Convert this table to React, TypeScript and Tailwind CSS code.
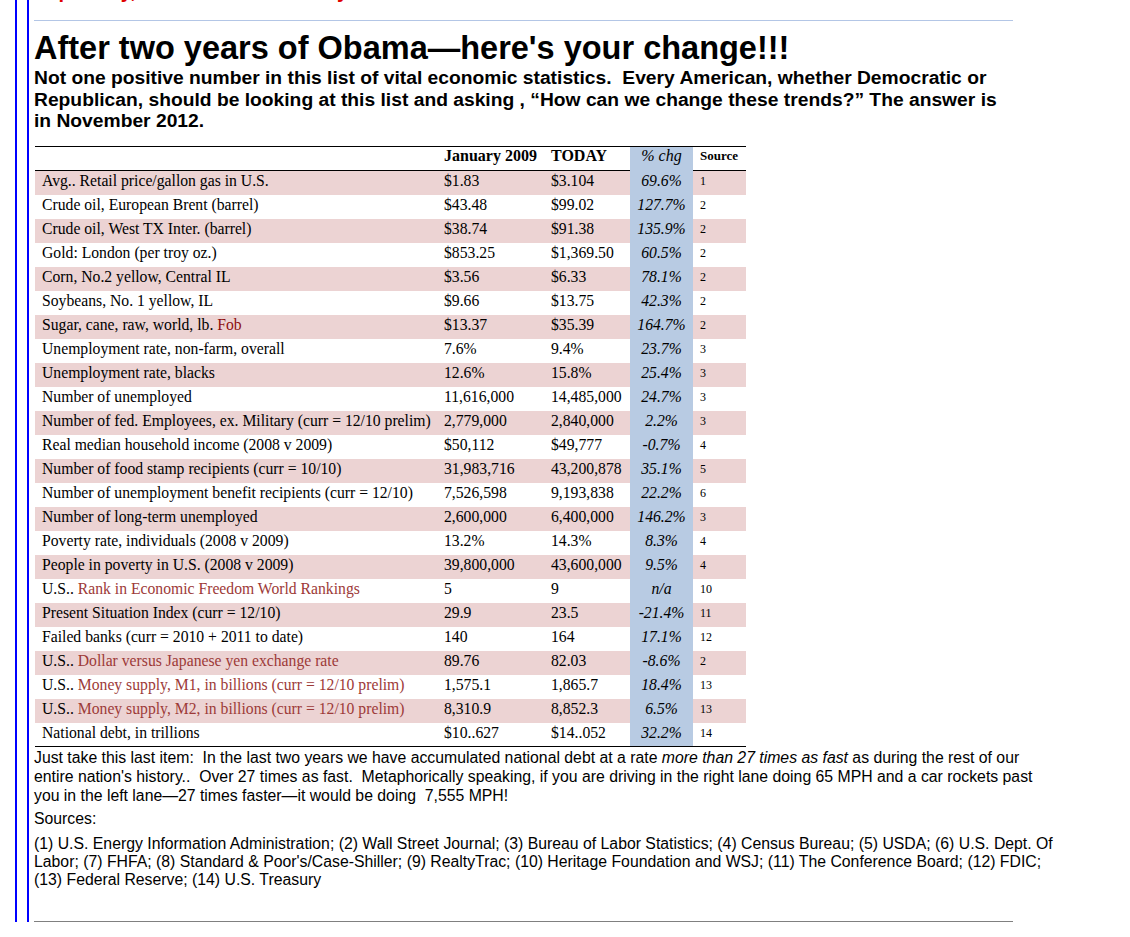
// Quoted e-mail: economic statistics table

type Row = {
  label: string
  red?: string
  jan: string
  today: string
  chg: string
  src: string
  redTone?: 'fob' | 'link'
}

const rows: Row[] = [
  { label: 'Avg.. Retail price/gallon gas in U.S.', jan: '$1.83', today: '$3.104', chg: '69.6%', src: '1' },
  { label: 'Crude oil, European Brent (barrel)', jan: '$43.48', today: '$99.02', chg: '127.7%', src: '2' },
  { label: 'Crude oil, West TX Inter. (barrel)', jan: '$38.74', today: '$91.38', chg: '135.9%', src: '2' },
  { label: 'Gold: London (per troy oz.)', jan: '$853.25', today: '$1,369.50', chg: '60.5%', src: '2' },
  { label: 'Corn, No.2 yellow, Central IL', jan: '$3.56', today: '$6.33', chg: '78.1%', src: '2' },
  { label: 'Soybeans, No. 1 yellow, IL', jan: '$9.66', today: '$13.75', chg: '42.3%', src: '2' },
  { label: 'Sugar, cane, raw, world, lb. ', red: 'Fob', redTone: 'fob', jan: '$13.37', today: '$35.39', chg: '164.7%', src: '2' },
  { label: 'Unemployment rate, non-farm, overall', jan: '7.6%', today: '9.4%', chg: '23.7%', src: '3' },
  { label: 'Unemployment rate, blacks', jan: '12.6%', today: '15.8%', chg: '25.4%', src: '3' },
  { label: 'Number of unemployed', jan: '11,616,000', today: '14,485,000', chg: '24.7%', src: '3' },
  { label: 'Number of fed. Employees, ex. Military (curr = 12/10 prelim)', jan: '2,779,000', today: '2,840,000', chg: '2.2%', src: '3' },
  { label: 'Real median household income (2008 v 2009)', jan: '$50,112', today: '$49,777', chg: '-0.7%', src: '4' },
  { label: 'Number of food stamp recipients (curr = 10/10)', jan: '31,983,716', today: '43,200,878', chg: '35.1%', src: '5' },
  { label: 'Number of unemployment benefit recipients (curr = 12/10)', jan: '7,526,598', today: '9,193,838', chg: '22.2%', src: '6' },
  { label: 'Number of long-term unemployed', jan: '2,600,000', today: '6,400,000', chg: '146.2%', src: '3' },
  { label: 'Poverty rate, individuals (2008 v 2009)', jan: '13.2%', today: '14.3%', chg: '8.3%', src: '4' },
  { label: 'People in poverty in U.S. (2008 v 2009)', jan: '39,800,000', today: '43,600,000', chg: '9.5%', src: '4' },
  { label: 'U.S.. ', red: 'Rank in Economic Freedom World Rankings', redTone: 'link', jan: '5', today: '9', chg: 'n/a', src: '10' },
  { label: 'Present Situation Index (curr = 12/10)', jan: '29.9', today: '23.5', chg: '-21.4%', src: '11' },
  { label: 'Failed banks (curr = 2010 + 2011 to date)', jan: '140', today: '164', chg: '17.1%', src: '12' },
  { label: 'U.S.. ', red: 'Dollar versus Japanese yen exchange rate', redTone: 'link', jan: '89.76', today: '82.03', chg: '-8.6%', src: '2' },
  { label: 'U.S.. ', red: 'Money supply, M1, in billions (curr = 12/10 prelim)', redTone: 'link', jan: '1,575.1', today: '1,865.7', chg: '18.4%', src: '13' },
  { label: 'U.S.. ', red: 'Money supply, M2, in billions (curr = 12/10 prelim)', redTone: 'link', jan: '8,310.9', today: '8,852.3', chg: '6.5%', src: '13' },
  { label: 'National debt, in trillions', jan: '$10..627', today: '$14..052', chg: '32.2%', src: '14' },
]

const sans = "font-['Liberation_Sans',Arial,Helvetica,sans-serif]"
const serif = "font-['Liberation_Serif','Times_New_Roman',Times,serif]"

function StatsTable() {
  return (
    <table className={`ml-[1px] w-[711px] table-fixed border-separate border-spacing-0 text-black ${serif}`}>
      <colgroup>
        <col className="w-[402px]" />
        <col className="w-[107px]" />
        <col className="w-[86px]" />
        <col className="w-[63px]" />
        <col className="w-[53px]" />
      </colgroup>
      <thead>
        <tr className="h-[25px]">
          <th className="border-y border-black" />
          <th className="border-y border-black px-[7px] text-left align-top text-[16px] font-bold leading-[18px]">January 2009</th>
          <th className="border-y border-black px-[7px] text-left align-top text-[16px] font-bold leading-[18px]">TODAY</th>
          <th className="border-t border-black bg-[#b8cbe3] text-center align-top text-[16px] font-normal italic leading-[18px]">% chg</th>
          <th className="border-y border-black px-[7px] pt-[2px] text-left align-top text-[13px] font-bold leading-[14px]">Source</th>
        </tr>
      </thead>
      <tbody>
        {rows.map((r, i) => {
          const pink = i % 2 === 0 ? 'bg-[#ecd3d3]' : 'bg-white'
          const last = i === rows.length - 1 ? 'border-b border-black' : ''
          return (
            <tr key={i} className="h-[24px]">
              <td className={`${pink} ${last} whitespace-nowrap px-[7px] pt-[1px] align-top text-[15.7px] leading-[18px]`}>
                {r.label}
                {r.red && (
                  <span className={r.redTone === 'fob' ? 'text-[#8e0f0f]' : 'text-[#9d3a38]'}>{r.red}</span>
                )}
              </td>
              <td className={`${pink} ${last} whitespace-nowrap px-[7px] pt-[1px] align-top text-[15.7px] leading-[18px]`}>{r.jan}</td>
              <td className={`${pink} ${last} whitespace-nowrap px-[7px] pt-[1px] align-top text-[15.7px] leading-[18px]`}>{r.today}</td>
              <td className={`bg-[#b8cbe3] ${last} whitespace-nowrap pt-[1px] text-center align-top text-[15.7px] italic leading-[18px]`}>{r.chg}</td>
              <td className={`${pink} ${last} px-[7px] pt-[3px] align-top text-[12px] leading-[14px]`}>{r.src}</td>
            </tr>
          )
        })}
      </tbody>
    </table>
  )
}

export default function App() {
  return (
    <div className="min-h-screen bg-white">
      {/* nested quote bars */}
      <div className="ml-[15px] w-fit border-l-2 border-[#0000ff] pl-[10px]">
        <div className={`w-[986px] border-l-2 border-[#0000ff] pl-[5px] text-black ${sans}`}>
          {/* previous red line, scrolled off the top */}
          <div className="h-[3px] overflow-hidden">
            <p className="-mt-[20px] whitespace-nowrap text-[20px] font-bold leading-[23px] text-[#e00000]">
              Especially, for those who voted yes on the ballot in 2008.
            </p>
          </div>

          <div className="mt-[17px] h-px w-[979px] bg-[#b3c6e6]" />

          <h1 className="mt-[8px] whitespace-nowrap text-[32.5px] font-bold leading-[38px]">
            After two years of Obama—here's your change!!!
          </h1>
          <div className="whitespace-pre text-[19.25px] font-bold leading-[21.5px]">
            <div>Not one positive number in this list of vital economic statistics.  Every American, whether Democratic or</div>
            <div>Republican, should be looking at this list and asking , “How can we change these trends?” The answer is</div>
            <div>in November 2012.</div>
          </div>

          <div className="mt-[14px]">
            <StatsTable />
          </div>

          <div className="mt-[1px] whitespace-pre text-[15.8px] leading-[19px]">
            <div>
              Just take this last item:  In the last two years we have accumulated national debt at a rate <i>more than 27 times as fast</i> as during the rest of our
            </div>
            <div>entire nation's history..  Over 27 times as fast.  Metaphorically speaking, if you are driving in the right lane doing 65 MPH and a car rockets past</div>
            <div>you in the left lane—27 times faster—it would be doing  7,555 MPH!</div>
          </div>
          <p className="mt-[4px] text-[15.8px] leading-[19px]">Sources:</p>
          <div className="mt-[7px] whitespace-pre text-[15.8px] leading-[18px]">
            <div>(1) U.S. Energy Information Administration; (2) Wall Street Journal; (3) Bureau of Labor Statistics; (4) Census Bureau; (5) USDA; (6) U.S. Dept. Of</div>
            <div>Labor; (7) FHFA; (8) Standard &amp; Poor's/Case-Shiller; (9) RealtyTrac; (10) Heritage Foundation and WSJ; (11) The Conference Board; (12) FDIC;</div>
            <div>(13) Federal Reserve; (14) U.S. Treasury</div>
          </div>

          <div className="mt-[32px] h-px w-[979px] bg-[#808080]" />
        </div>
      </div>
    </div>
  )
}
